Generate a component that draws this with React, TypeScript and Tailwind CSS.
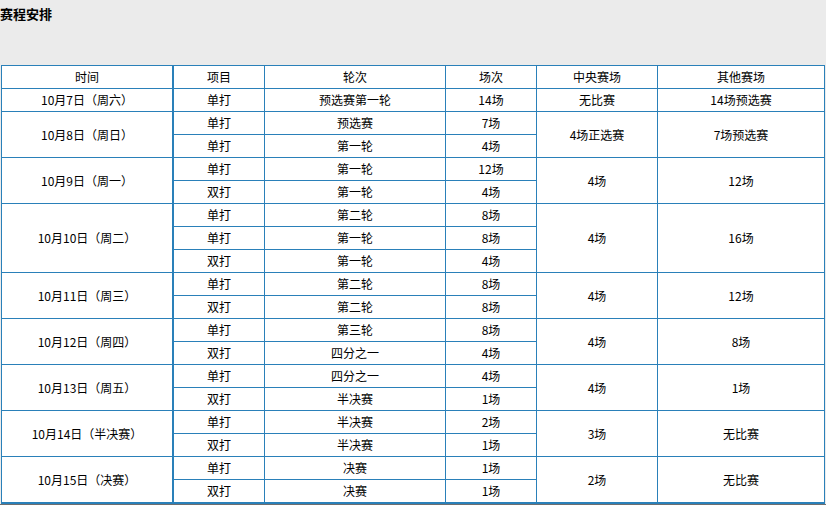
import React from 'react';

interface Match {
  kind: string;
  round: string;
  count: string;
}

interface DayGroup {
  date: string;
  matches: Match[];
  center: string;
  other: string;
}

const schedule: DayGroup[] = [
  { date: '10月7日（周六）', center: '无比赛', other: '14场预选赛', matches: [{ kind: '单打', round: '预选赛第一轮', count: '14场' }] },
  {
    date: '10月8日（周日）', center: '4场正选赛', other: '7场预选赛',
    matches: [
      { kind: '单打', round: '预选赛', count: '7场' },
      { kind: '单打', round: '第一轮', count: '4场' },
    ],
  },
  {
    date: '10月9日（周一）', center: '4场', other: '12场',
    matches: [
      { kind: '单打', round: '第一轮', count: '12场' },
      { kind: '双打', round: '第一轮', count: '4场' },
    ],
  },
  {
    date: '10月10日（周二）', center: '4场', other: '16场',
    matches: [
      { kind: '单打', round: '第二轮', count: '8场' },
      { kind: '单打', round: '第一轮', count: '8场' },
      { kind: '双打', round: '第一轮', count: '4场' },
    ],
  },
  {
    date: '10月11日（周三）', center: '4场', other: '12场',
    matches: [
      { kind: '单打', round: '第二轮', count: '8场' },
      { kind: '双打', round: '第二轮', count: '8场' },
    ],
  },
  {
    date: '10月12日（周四）', center: '4场', other: '8场',
    matches: [
      { kind: '单打', round: '第三轮', count: '8场' },
      { kind: '双打', round: '四分之一', count: '4场' },
    ],
  },
  {
    date: '10月13日（周五）', center: '4场', other: '1场',
    matches: [
      { kind: '单打', round: '四分之一', count: '4场' },
      { kind: '双打', round: '半决赛', count: '1场' },
    ],
  },
  {
    date: '10月14日（半决赛）', center: '3场', other: '无比赛',
    matches: [
      { kind: '单打', round: '半决赛', count: '2场' },
      { kind: '双打', round: '半决赛', count: '1场' },
    ],
  },
  {
    date: '10月15日（决赛）', center: '2场', other: '无比赛',
    matches: [
      { kind: '单打', round: '决赛', count: '1场' },
      { kind: '双打', round: '决赛', count: '1场' },
    ],
  },
];

// shared cell look: top + left border, centered text
const cell = 'h-[23px] p-0 text-center align-middle border-t border-l border-[#2a80b9] leading-[22px]';

export default function App() {
  return (
    <div
      className="w-[826px] h-[505px] bg-[#ebebeb] text-black text-[12px] overflow-hidden"
      style={{ fontFamily: '"Noto Sans CJK SC", "Noto Sans", sans-serif' }}
    >
      {/* Title */}
      <div className="h-[65px] pt-[5px] text-[13px] font-bold leading-[18px]">赛程安排</div>

      {/* Schedule table */}
      <table className="ml-[1px] w-[823px] table-fixed border-separate border-spacing-0 bg-white border-r border-b-2 border-[#2a80b9]">
        <colgroup>
          <col className="w-[171px]" />
          <col className="w-[92px]" />
          <col className="w-[181px]" />
          <col className="w-[91px]" />
          <col className="w-[121px]" />
          <col className="w-[167px]" />
        </colgroup>
        <thead>
          <tr>
            <th className={`${cell} font-normal`}>时间</th>
            <th className={`${cell} border-l-2 font-normal`}>项目</th>
            <th className={`${cell} font-normal`}>轮次</th>
            <th className={`${cell} font-normal`}>场次</th>
            <th className={`${cell} font-normal`}>中央赛场</th>
            <th className={`${cell} font-normal`}>其他赛场</th>
          </tr>
        </thead>
        <tbody>
          {schedule.map((day) =>
            day.matches.map((m, i) => (
              <tr key={day.date + i}>
                {i === 0 && (
                  <td className={cell} rowSpan={day.matches.length}>
                    {day.date}
                  </td>
                )}
                <td className={`${cell} border-l-2`}>{m.kind}</td>
                <td className={cell}>{m.round}</td>
                <td className={cell}>{m.count}</td>
                {i === 0 && (
                  <>
                    <td className={cell} rowSpan={day.matches.length}>
                      {day.center}
                    </td>
                    <td className={cell} rowSpan={day.matches.length}>
                      {day.other}
                    </td>
                  </>
                )}
              </tr>
            ))
          )}
        </tbody>
      </table>
      <div className="h-[3px] bg-[#6f6f6f]" />
    </div>
  );
}
